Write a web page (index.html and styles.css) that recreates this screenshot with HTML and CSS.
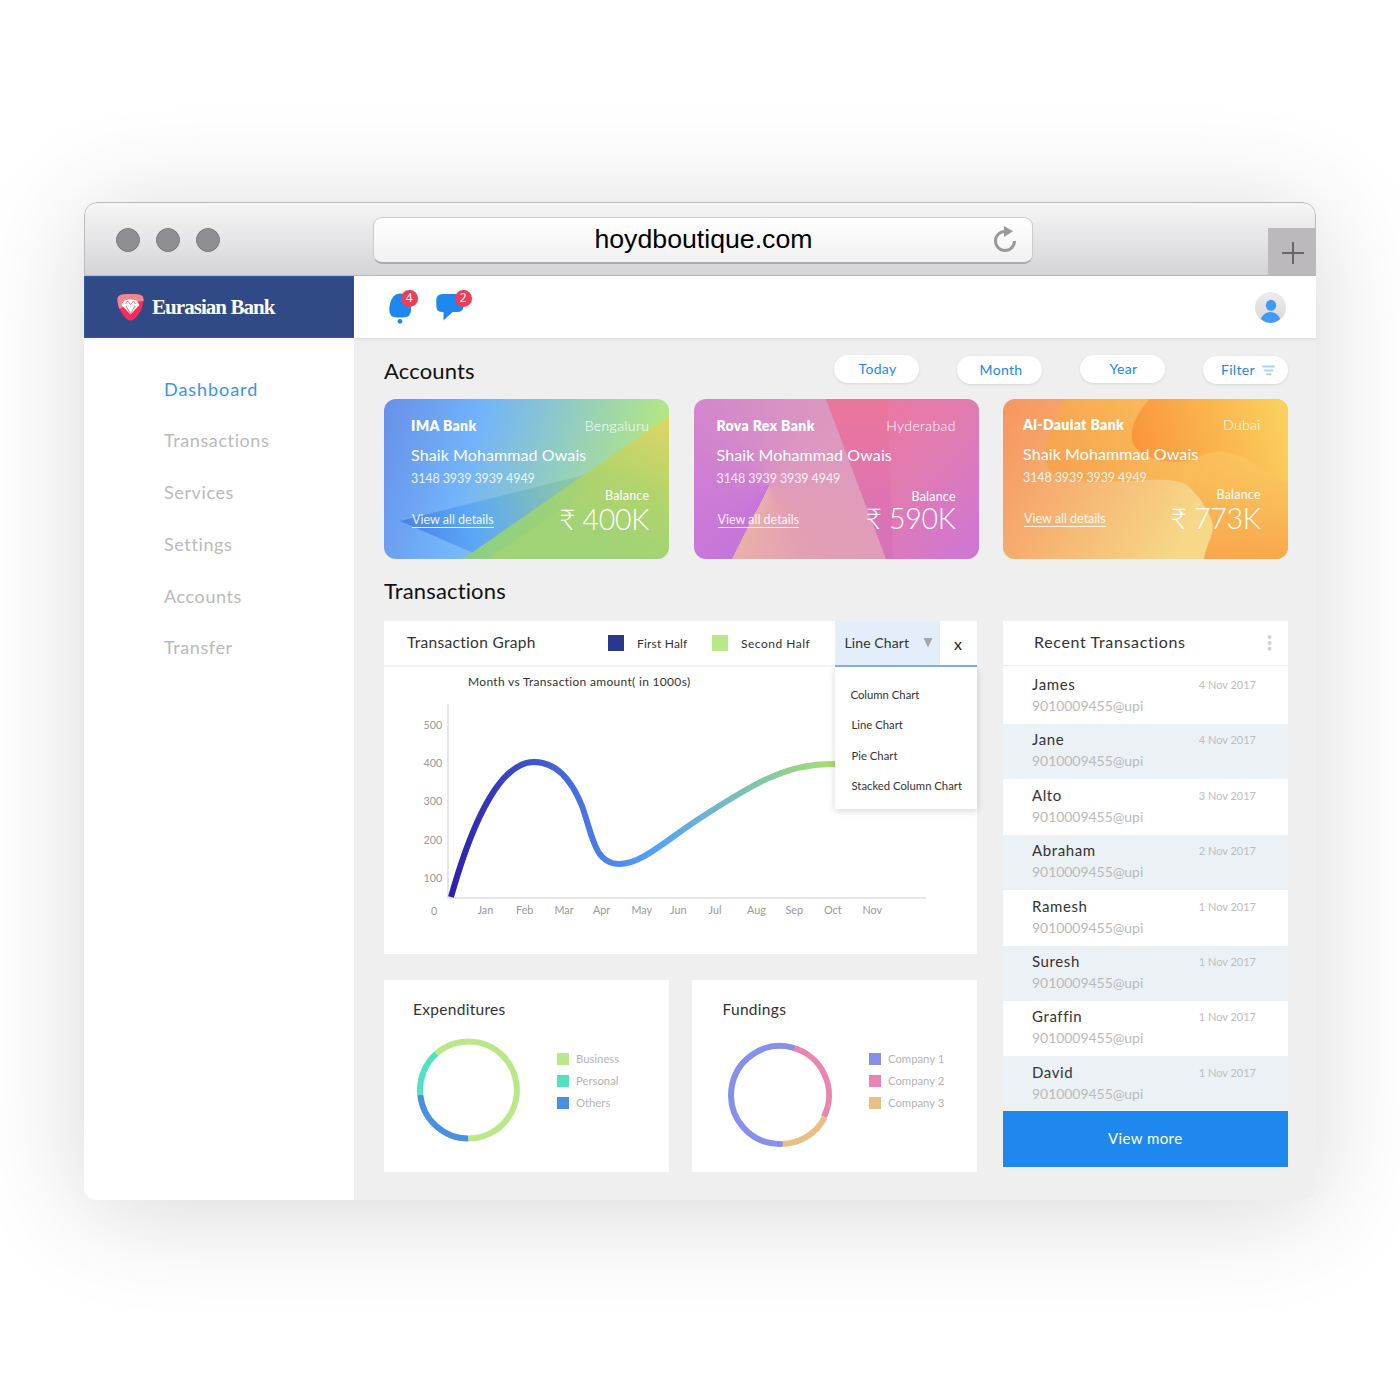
FILE: index.html
```html
<!DOCTYPE html>
<html lang="en">
<head>
<meta charset="utf-8">
<title>Eurasian Bank</title>
<link rel="stylesheet" href="styles.css">
</head>
<body>
<div class="window">
  <div class="titlebar">
    <div class="lights"><i></i><i></i><i></i></div>
    <div class="address"><span>hoydboutique.com</span>
      <svg class="reload" width="24" height="28" viewBox="0 0 24 28"><path d="M12 5.5A9.5 9.5 0 1 0 21.5 15" fill="none" stroke="#999" stroke-width="3"/><path d="M11 0l9 5.3-9 5.7z" fill="#999"/></svg>
    </div>
    <div class="newtab"><svg width="22" height="22" viewBox="0 0 22 22"><path d="M11 0v22M0 11h22" stroke="#666" stroke-width="2"/></svg></div>
  </div>
  <div class="app">
    <aside class="sidebar">
      <div class="brand">
        <svg width="27" height="27" viewBox="0 0 27 27">
          <path d="M4 .8Q13.500-1 23 .8Q27 2 26.500 7Q25 19 16.500 25.500Q13.500 27.500 10.500 25.500Q2 19 .5 7Q0 2 4 .8z" fill="#fb2a58"/>
          <path d="M4 .8Q13.500-1 23 .8Q27 2 26.500 7Q20 7 13 10T2.500 15Q.8 11 .5 7Q0 2 4 .8z" fill="#f08795"/>
          <path d="M7.500 6.500Q13.500 4.500 19.500 6.500L22.500 11L13.500 20.500L4.500 11z" fill="#fff"/>
          <path d="M9 12l4.500 8 4.500-8M8.500 10l2-3 3 3.500 3-3.500 2 3" fill="none" stroke="#f2506f" stroke-width=".8"/>
        </svg>
        <span>Eurasian Bank</span>
      </div>
      <nav>
        <a class="active">Dashboard</a><a>Transactions</a><a>Services</a><a>Settings</a><a>Accounts</a><a>Transfer</a>
      </nav>
    </aside>
    <div class="main">
      <header class="topbar">
        <div class="notify bell">
          <svg width="23" height="31" viewBox="0 0 23 31"><path d="M11.500.5C17 .5 22 7 22 15V17Q22 24.500 14 24.500H8Q.3 24.500.3 17C.3 8 4 .5 11.500.5z" fill="#1e88ef"/><circle cx="11" cy="28.300" r="2.400" fill="#1e88ef"/></svg>
          <b class="badge">4</b>
        </div>
        <div class="notify chat">
          <svg width="28" height="28" viewBox="0 0 28 28"><path d="M6.500 1H21Q27.500 1 27.500 7.500V13Q27.500 19 21 19H16.500L7.500 27.500V19H6.500Q.3 19 .3 13V7.500Q.3 1 6.500 1z" fill="#1e88ef"/></svg>
          <b class="badge">2</b>
        </div>
        <svg class="avatar" width="31" height="31" viewBox="0 0 31 31"><defs><linearGradient id="av" x2="0" y2="1"><stop stop-color="#ececec"/><stop offset="1" stop-color="#d9d9d9"/></linearGradient><clipPath id="ac"><circle cx="15.500" cy="15.500" r="15.500"/></clipPath></defs><circle cx="15.500" cy="15.500" r="15.500" fill="url(#av)"/><g clip-path="url(#ac)" fill="#3f9bf5"><ellipse cx="16" cy="13.300" rx="5.200" ry="5.500"/><path d="M5.700 27Q9 20 15.500 20T25.300 27Q20 31 15.500 31T5.700 27z"/></g></svg>
      </header>
      <div class="content">
        <div class="headline">
          <h2>Accounts</h2>
          <div class="filters">
            <button>Today</button><button class="low">Month</button><button>Year</button>
            <button class="low filter">Filter<svg width="13" height="11" viewBox="0 0 13 11"><path d="M1 1.500h11M2.500 5.500h8M5 9.200h3.500" stroke="#a9d3fb" stroke-width="2" stroke-linecap="round"/></svg></button>
          </div>
        </div>
        <div class="cards">
          <article class="card c1">
            <svg class="art" viewBox="0 0 285 160" preserveAspectRatio="none">
              <defs>
                <linearGradient id="g1" gradientUnits="userSpaceOnUse" x1="-10" y1="10" x2="265" y2="90"><stop stop-color="#678de6"/><stop offset=".36" stop-color="#72b3fb"/><stop offset="1" stop-color="#b4e882"/></linearGradient>
                <linearGradient id="g2" gradientUnits="userSpaceOnUse" x1="15" y1="122" x2="240" y2="70"><stop stop-color="#4c80e6"/><stop offset=".3" stop-color="#5ba7f8"/><stop offset="1" stop-color="#a4d67a"/></linearGradient>
                <linearGradient id="g3" gradientUnits="userSpaceOnUse" x1="285" y1="25" x2="225" y2="150"><stop stop-color="#dcd566"/><stop offset=".5" stop-color="#b3d46c"/><stop offset="1" stop-color="#9fd375"/></linearGradient>
                <linearGradient id="g4" x2="1" y2="0"><stop stop-color="#79c895"/><stop offset="1" stop-color="#a0d276" stop-opacity="0"/></linearGradient>
              </defs>
              <path d="M0 0h285v160H0z" fill="url(#g1)"/>
              <path d="M16 122L245 65L103 160z" fill="url(#g2)"/>
              <path d="M285 17V160H79z" fill="url(#g3)"/>
              <path d="M88 154L200 75L245 65L103 160H79z" fill="url(#g4)" opacity=".55"/>
            </svg>
            <div class="left"><strong>IMA Bank</strong><span class="name">Shaik Mohammad Owais</span><span class="number">3148 3939 3939 4949</span><a>View all details</a></div>
            <div class="right"><span class="city">Bengaluru</span><span class="label">Balance</span><span class="amount">₹ 400K</span></div>
          </article>
          <article class="card c2">
            <svg class="art" viewBox="0 0 285 160" preserveAspectRatio="none">
              <defs><linearGradient id="p2" x1="0" x2="1" y1="0" y2="1"><stop stop-color="#ef7699"/><stop offset=".5" stop-color="#e27bb0"/><stop offset="1" stop-color="#ce76d6"/></linearGradient>
              <linearGradient id="p3" x2="0" y2="1"><stop stop-color="#ec769b"/><stop offset="1" stop-color="#d572bd"/></linearGradient></defs>
              <path d="M132 0H285V160H192z" fill="url(#p2)"/>
              <path d="M132 0H194L199 160H192z" fill="url(#p3)"/>
            </svg>
            <div class="left"><strong>Rova Rex Bank</strong><span class="name">Shaik Mohammad Owais</span><span class="number">3148 3939 3939 4949</span><a>View all details</a></div>
            <div class="right"><span class="city">Hyderabad</span><span class="label">Balance</span><span class="amount">₹ 590K</span></div>
          </article>
          <article class="card c3">
            <svg class="art" viewBox="0 0 285 160" preserveAspectRatio="none">
              <defs>
                <linearGradient id="o1" x2="1" y2=".35"><stop stop-color="#f69561"/><stop offset="1" stop-color="#f6d888"/></linearGradient>
                <linearGradient id="o2" gradientUnits="userSpaceOnUse" x1="60" y1="90" x2="240" y2="10"><stop stop-color="#f7a24f"/><stop offset=".5" stop-color="#f9b757"/><stop offset="1" stop-color="#fac75c"/></linearGradient>
                <linearGradient id="o3" gradientUnits="userSpaceOnUse" x1="135" y1="55" x2="285" y2="10"><stop stop-color="#fa963d"/><stop offset="1" stop-color="#fad25f"/></linearGradient>
                <linearGradient id="o4" x2="1" y2=".25"><stop stop-color="#f69d66"/><stop offset="1" stop-color="#f6d888"/></linearGradient>
                <linearGradient id="o5" x2="0" y2="1"><stop stop-color="#f9b455" stop-opacity="0"/><stop offset="1" stop-color="#f9a64c"/></linearGradient>
              </defs>
              <path d="M0 0h285v160H0z" fill="url(#o1)"/>
              <path d="M63 0C50 25 42 45 42 62C42 95 150 75 175 84L200 160H285V0z" fill="url(#o2)"/>
              <path d="M190 60H285V160H190z" fill="url(#o5)"/>
              <path d="M146 0C129 22 128 30 129 42C133 55 155 64 175 63C195 61 205 50 222 53C245 56 265 75 285 84V0z" fill="url(#o3)"/>
              <path d="M0 62H43C47 90 105 84 130 82C155 80 177 80 185 87C195 96 203 108 208 119C214 135 203 143 201 160H0z" fill="url(#o4)"/>
            </svg>
            <div class="left"><strong>Al-Daulat Bank</strong><span class="name">Shaik Mohammad Owais</span><span class="number">3148 3939 3939 4949</span><a>View all details</a></div>
            <div class="right"><span class="city">Dubai</span><span class="label">Balance</span><span class="amount">₹ 773K</span></div>
          </article>
        </div>
        <h2 class="second">Transactions</h2>
        <div class="board">
          <div class="charts">
            <section class="graph">
              <div class="graph-head">
                <h3>Transaction Graph</h3>
                <span class="key"><i class="navy"></i>First Half</span>
                <span class="key k2"><i class="lime"></i>Second Half</span>
                <div class="picker">
                  <div class="select">Line Chart<svg width="10" height="10" viewBox="0 0 10 10"><path d="M.5 0h9L5 9.500z" fill="#a6a6a6"/></svg></div>
                  <div class="close">x</div>
                  <ul class="menu"><li class="first">Column Chart</li><li>Line Chart</li><li>Pie Chart</li><li>Stacked Column Chart</li></ul>
                </div>
              </div>
              <svg class="plot" width="592" height="287" viewBox="384 667 592 287">
                <defs><linearGradient id="ln" gradientUnits="userSpaceOnUse" x1="451" y1="0" x2="868" y2="0"><stop stop-color="#2f20ab"/><stop offset=".48" stop-color="#53a0fd"/><stop offset="1" stop-color="#b4ec51"/></linearGradient></defs>
                <text class="caption" x="468" y="686">Month vs Transaction amount( in 1000s)</text>
                <path d="M448 704V898H926" fill="none" stroke="#e6e6e6" stroke-width="2"/>
                <g class="tick"><text x="423.500" y="729">500</text><text x="423.500" y="767">400</text><text x="423.500" y="805">300</text><text x="423.500" y="843.500">200</text><text x="423.500" y="881.500">100</text><text x="431" y="915">0</text>
                <text x="477.500" y="914">Jan</text><text x="516" y="914">Feb</text><text x="554.500" y="914">Mar</text><text x="593" y="914">Apr</text><text x="631.500" y="914">May</text><text x="670" y="914">Jun</text><text x="708.500" y="914">Jul</text><text x="747" y="914">Aug</text><text x="785.500" y="914">Sep</text><text x="824" y="914">Oct</text><text x="862.500" y="914">Nov</text></g>
                <path d="M451 897C475 812 503 762 534 762C553 762 570 776 582 806C592 833 594 864 619 864C643 864 668 838 705 815C750 786 785 764 830 764H858" fill="none" stroke="url(#ln)" stroke-width="6"/>
              </svg>
            </section>
            <div class="donuts">
              <section class="donut">
                <h3>Expenditures</h3>
                <svg width="104" height="106" viewBox="417 1037 104 106"><g fill="none" stroke-width="6"><path d="M468.500 1138.500A48.500 48.500 0 0 1 420.300 1095" stroke="#4a90e2"/><path d="M420.300 1095A48.500 48.500 0 0 1 436.500 1053.500" stroke="#50e3c2"/><path d="M436.500 1053.500A48.500 48.500 0 1 1 468.500 1138.500" stroke="#b8e986"/></g></svg>
                <ul><li><i class="lime"></i>Business</li><li><i class="teal"></i>Personal</li><li><i class="blue"></i>Others</li></ul>
              </section>
              <section class="donut d2">
                <h3>Fundings</h3>
                <svg width="106" height="106" viewBox="727.300 1041.700 106 106"><g fill="none" stroke-width="6"><path d="M793 1047.400A49 49 0 0 1 824.200 1116.500" stroke="#ea85b1"/><path d="M825 1117A49 49 0 0 1 780 1143.700" stroke="#eabf85"/><path d="M780.300 1143.700A49 49 0 1 1 792 1047.100" stroke="#868fea" stroke-linecap="round"/></g></svg>
                <ul><li><i class="peri"></i>Company 1</li><li><i class="pink"></i>Company 2</li><li><i class="sand"></i>Company 3</li></ul>
              </section>
            </div>
          </div>
          <section class="recent">
            <div class="recent-head"><h3>Recent Transactions</h3><svg width="5" height="16" viewBox="0 0 5 16"><g fill="#d2d2d2"><circle cx="2.500" cy="2" r="2"/><circle cx="2.500" cy="8" r="2"/><circle cx="2.500" cy="13.800" r="2"/></g></svg></div>
            <ul>
              <li><div><b>James</b><span>9010009455@upi</span></div><time>4 Nov 2017</time></li>
              <li><div><b>Jane</b><span>9010009455@upi</span></div><time>4 Nov 2017</time></li>
              <li><div><b>Alto</b><span>9010009455@upi</span></div><time>3 Nov 2017</time></li>
              <li><div><b>Abraham</b><span>9010009455@upi</span></div><time>2 Nov 2017</time></li>
              <li><div><b>Ramesh</b><span>9010009455@upi</span></div><time>1 Nov 2017</time></li>
              <li><div><b>Suresh</b><span>9010009455@upi</span></div><time>1 Nov 2017</time></li>
              <li><div><b>Graffin</b><span>9010009455@upi</span></div><time>1 Nov 2017</time></li>
              <li><div><b>David</b><span>9010009455@upi</span></div><time>1 Nov 2017</time></li>
            </ul>
            <button class="more">View more</button>
          </section>
        </div>
      </div>
    </div>
  </div>
</div>
</body>
</html>
```
FILE: styles.css
```css
* { box-sizing: border-box; margin: 0; padding: 0; }
body { background: #fff; font-family: Lato, "Noto Sans", sans-serif; font-variant-ligatures: none; padding: 202px 84px 0; height: 1400px; overflow: hidden; }
ul { list-style: none; }
button { border: 0; font-family: inherit; }
svg { display: block; flex: none; }

.window { width: 1232px; height: 998px; border-radius: 13px; overflow: hidden; box-shadow: 0 10px 110px rgba(0, 0, 0, .16); display: flex; flex-direction: column; }

.titlebar { height: 74px; flex: none; display: flex; align-items: center; position: relative; background: linear-gradient(#f6f6f6, #d5d3d6); border: 1px solid #bcbabd; border-radius: 13px 13px 0 0; }
.lights { display: flex; gap: 16px; margin-left: 31px; margin-top: 2px; }
.lights i { width: 24px; height: 24px; border-radius: 50%; background: #8f8e93; border: 1px solid #79787c; }
.address { margin-left: 153px; margin-top: 3px; width: 660px; height: 47px; border-radius: 9px; border: 1px solid #cbcacc; border-bottom: 2px solid #aaa9ab; background: linear-gradient(#fff, #f1f1f1); display: flex; align-items: center; justify-content: center; position: relative; font: 26.7px/44px "Liberation Sans", sans-serif; color: #000; }
.address span { margin: -2px 0 0 1px; }
.reload { position: absolute; right: 15px; top: 8px; }
.newtab { position: absolute; right: -1px; bottom: -1px; width: 48px; height: 48px; background: #bbb9bc; display: flex; align-items: center; justify-content: center; padding: 2px 0 0 2px; }

.app { flex: 1; display: flex; }
.sidebar { width: 270px; background: #fff; flex: none; }
.brand { height: 62px; background: #304987; border: 1px solid #2c5ba8; display: flex; align-items: center; padding-left: 32px; gap: 8px; color: #fff; font: bold 21px/24px "Liberation Serif", serif; letter-spacing: -.95px; }
nav { padding: 24.500px 0 0 80px; display: flex; flex-direction: column; }
nav a { height: 51.8px; line-height: 52px; font-size: 18px; color: #bababa; letter-spacing: .6px; }
nav .active { color: #3d93ea; letter-spacing: .95px; }

.main { width: 962px; background: #efefef; }
.topbar { height: 62px; background: #fff; display: flex; box-shadow: 0 1px 3px rgba(0, 0, 0, .1); padding: 0 30px 0 35px; position: relative; }
.notify { position: relative; margin-top: 17px; }
.chat { margin-left: 24px; }
.badge { position: absolute; width: 16.500px; height: 16.500px; border-radius: 50%; background: #ef3d55; color: #fff; font: 12px/16.500px "Noto Sans", sans-serif; text-align: center; top: -3px; left: 12px; }
.chat .badge { left: 19px; }
.avatar { margin: 16px 0 0 auto; }

.content { padding: 0 28px 0 30px; }
.headline { display: flex; justify-content: space-between; height: 61px; }
h2 { font-size: 22px; font-weight: 400; line-height: 28px; letter-spacing: .15px; color: #111; }
.headline h2 { margin-top: 19px; }
.filters { display: flex; gap: 38px; margin-top: 17px; }
.filters button { width: 85px; height: 28px; border-radius: 14px; background: #fff; color: #1e88ef; font-size: 14px; line-height: 28px; box-shadow: 0 1px 3px rgba(0, 0, 0, .1); letter-spacing: .3px; padding-left: 2px; }
.filters .low { margin-top: 1px; padding-left: 3px; }
.filters .filter { display: flex; align-items: center; gap: 7px; padding-left: 18px; }

.cards { display: flex; justify-content: space-between; padding-top: .4px; }
.card { width: 285px; height: 160px; border-radius: 12px; position: relative; overflow: hidden; display: flex; justify-content: space-between; color: #fff; line-height: 20px; }
.card .art { position: absolute; left: 0; top: 0; width: 100%; height: 100%; }
.card .left, .card .right { position: relative; display: flex; flex-direction: column; white-space: nowrap; }
.card .left { width: 120px; }
.card .right { align-items: flex-end; text-align: right; }
.c1 { padding: 17px 20px 0 27px; }
.c2 { padding: 17px 23px 0 23px; background: conic-gradient(from 0deg at 75px 87px, #d890c5 0deg, #dc97bf 40deg, #df9cbb 90deg, #e49fb4 150deg, #e9b0aa 207deg, #c774dc 207deg, #ce7fd2 280deg, #d488cb 325deg, #d890c5 360deg); }
.c3 { padding: 16px 27.500px 0 20px; }
.card strong { font-size: 14px; font-weight: 800; letter-spacing: .35px; }
.card .name { font-size: 16px; margin-top: 9px; letter-spacing: .1px; }
.card .number { font-size: 12.500px; margin-top: 4px; opacity: .85; letter-spacing: -.1px; }
.card a { font-size: 12.500px; line-height: 14px; margin-top: 24px; margin-left: 1px; align-self: flex-start; opacity: .9; border-bottom: 1px solid #fff; }
.card .city { font-size: 14px; font-weight: 300; letter-spacing: .4px; margin-right: -.4px; }
.card .label { font-size: 12.500px; line-height: 14px; letter-spacing: .2px; margin: 53px -.2px 0 0; }
.card .amount { font-size: 28.500px; font-weight: 300; line-height: 26px; margin-top: 2.500px; letter-spacing: -.3px; }
.c2 .label { margin-top: 54px; }
.c2 .amount { margin-top: 1px; }

h2.second { margin-top: 18.100px; }
.board { display: flex; justify-content: space-between; margin-top: 15.500px; }
.charts { width: 592.500px; }
h3 { font-weight: 400; color: #333; }
.graph { background: #fff; height: 333px; }
.graph-head { height: 46px; border-bottom: 2px solid #f4f4f4; display: flex; position: relative; padding-left: 23px; line-height: 43px; }
.graph-head h3 { font-size: 15.500px; width: 201px; letter-spacing: .3px; }
.key { font-size: 12px; color: #333; display: flex; align-items: center; gap: 13px; width: 104px; white-space: nowrap; padding-top: 1px; letter-spacing: .2px; }
.k2 { letter-spacing: .5px; }
.key i { width: 16px; height: 16px; flex: none; }
.navy { background: #28388d; } .lime { background: #b8e986; } .teal { background: #50e3c2; } .blue { background: #4a90e2; }
.peri { background: #868fea; } .pink { background: #ea85b1; } .sand { background: #eabf85; }
.picker { position: absolute; right: 0; top: 0; width: 142px; height: 46px; display: flex; border-bottom: 2px solid #82abde; }
.select { width: 105px; height: 44px; background: #e4eefa; display: flex; align-items: center; justify-content: space-between; padding: 0 7px 0 10px; font-size: 14px; line-height: 42px; letter-spacing: .1px; color: #333; }
.close { flex: 1; text-align: center; font-size: 16px; line-height: 45px; color: #222; }
.menu { position: absolute; top: 46px; left: 0; width: 142px; height: 142px; background: #fff; box-shadow: 0 2px 7px rgba(0, 0, 0, .16); padding: 13px 0 0 17px; font-size: 11.300px; color: #333; white-space: nowrap; clip-path: inset(0 -12px -14px -12px); }
.menu li { height: 30.300px; line-height: 30.300px; }
.menu .first { margin-left: -1px; }
.caption { font-size: 12px; fill: #333; letter-spacing: .31px; }
.tick { font-size: 10.800px; fill: #999; }

.donuts { display: flex; justify-content: space-between; margin-top: 26px; }
.donut { background: #fff; height: 192px; width: 284.500px; display: grid; grid-template-columns: 139px 1fr; grid-template-rows: 57px 1fr; padding-left: 33px; }
.donut h3 { grid-column: 1 / 3; font-size: 15.500px; line-height: 20px; margin: 19px 0 0 -4px; letter-spacing: .3px; }
.donut ul { padding: 11px 0 0 1px; }
.donut li { height: 22px; line-height: 20px; display: flex; align-items: center; gap: 7px; font-size: 11.300px; color: #b3b3b3; }
.donut li i { width: 12px; height: 12px; }
.d2 { padding-left: 35px; grid-template-columns: 141px 1fr; }
.d2 svg { margin-top: 5px; }
.d2 h3 { margin-left: -4.500px; }

.recent { width: 285px; }
.recent-head { height: 45px; background: #fff; border-bottom: 1px solid #ececec; display: flex; justify-content: space-between; align-items: center; padding: 0 16px 0 31px; }
.recent-head h3 { font-size: 16px; letter-spacing: .65px; margin-top: -2px; }
.recent li { height: 55.400px; background: #fff; display: flex; justify-content: space-between; padding: 5.500px 32px 0 29px; }
.recent li:first-child { height: 58px; padding-top: 8px; }
.recent li:nth-child(even) { background: #ecf1f6; }
.recent li div { display: flex; flex-direction: column; }
.recent b { font-weight: 400; font-size: 15px; line-height: 20px; color: #333; letter-spacing: .6px; }
.recent span { font-size: 14px; line-height: 20px; margin-top: 2px; color: #bababa; letter-spacing: -.05px; }
.recent time { font-size: 11px; line-height: 22px; color: #bdbdbd; }
.more { display: block; width: 284.500px; height: 56px; margin-top: -.6px; background: #1e88ef; color: #fff; font-size: 15px; letter-spacing: .4px; padding-bottom: 3px; }
```
